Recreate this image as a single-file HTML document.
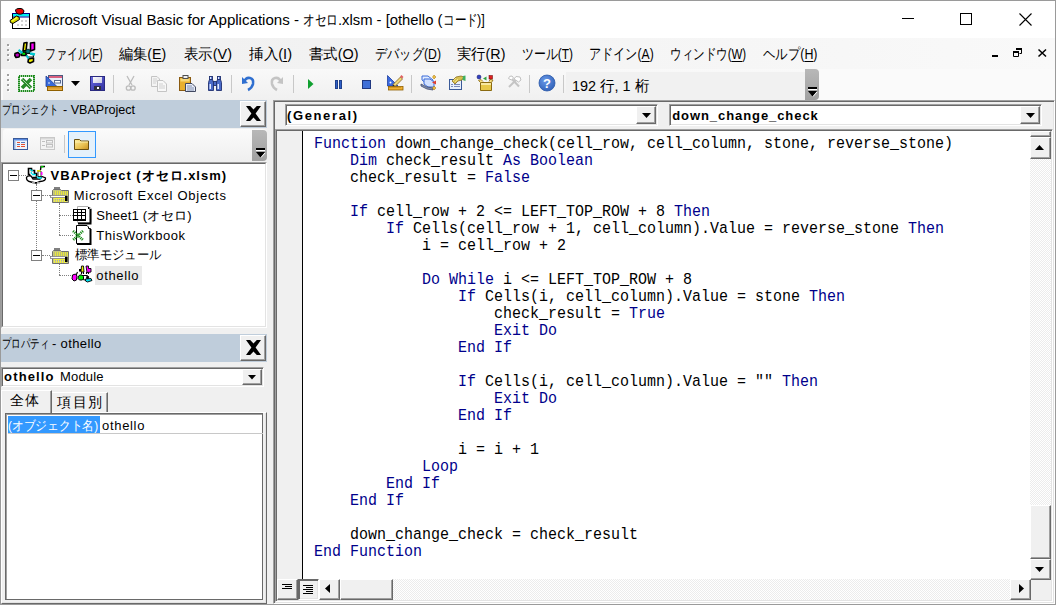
<!DOCTYPE html>
<html><head><meta charset="utf-8"><style>
*{box-sizing:border-box;margin:0;padding:0}
html,body{width:1056px;height:605px;overflow:hidden;background:#f0f0f0;font-family:"Liberation Sans",sans-serif;position:relative;color:#000}
.a{position:absolute}
svg{position:absolute;overflow:visible}
.t{position:absolute;white-space:pre;line-height:15px;transform-origin:0 0}
.t u{text-decoration:underline;text-underline-offset:2px}
.code{position:absolute;font-family:"Liberation Mono",monospace;font-size:15px;line-height:15px;white-space:pre;color:#000;transform:scaleY(1.1);transform-origin:0 0}
.k{color:#00008b}
.sep{position:absolute;width:1px;height:18px;background:#c8c8c8;top:75px}
.btn{position:absolute;background:#f0f0f0;border:1px solid;border-color:#fff #696969 #696969 #fff;box-shadow:inset -1px -1px 0 #a0a0a0}
.sunk{position:absolute;border:1px solid;border-color:#a0a0a0 #fff #fff #a0a0a0;box-shadow:inset 1px 1px 0 #696969,inset -1px -1px 0 #e3e3e3}
.dot{position:absolute;width:2px;height:2px;background:#a0a0a0;box-shadow:1px 1px 0 #fff}

</style></head><body>
<!-- window frame -->
<div class="a" style="left:0;top:0;width:1056px;height:605px;border:1px solid #9a9a9a"></div>
<div class="a" style="left:1px;top:1px;width:1054px;height:37px;background:#fff"></div>
<!-- title icon -->
<svg style="left:0;top:0" width="40" height="40">
<rect x="12.5" y="13.5" width="17" height="15" fill="#fff" stroke="#000"/>
<rect x="12" y="13" width="18" height="1" fill="#00008a"/>
<rect x="13" y="14" width="16" height="2.5" fill="#00f0f0"/>
<rect x="13" y="16.5" width="16" height="1" fill="#0000a0"/>
<g fill="#d0d0d0"><rect x="21" y="20" width="2" height="2"/><rect x="25" y="20" width="2" height="2"/><rect x="17" y="24" width="2" height="2"/><rect x="21" y="24" width="2" height="2"/><rect x="25" y="24" width="2" height="2"/></g>
<path d="M15.5 10 Q16 8.5 19 8.5 L21 8.5 Q23.5 9 24 11 L23 13.5 Q21 14.5 18 14 Q15.5 13 15.5 10Z" fill="#e80000" stroke="#000" stroke-width="1"/>
<path d="M10 20.5 L16.5 16 L19 17 L19.5 19.5 L13 23.5 L10.5 22.5Z" fill="#d8d800" stroke="#000" stroke-width="1"/>
<path d="M12 21 L17 17.5" stroke="#ffff40" stroke-width="1.2"/>
</svg>
<!-- window controls -->
<div class="a" style="left:902px;top:18px;width:12px;height:1px;background:#000"></div>
<div class="a" style="left:960px;top:13px;width:12px;height:12px;border:1px solid #000"></div>
<svg style="left:1019px;top:13px" width="13" height="13"><path d="M0.5 0.5L12.5 12.5M12.5 0.5L0.5 12.5" stroke="#000" stroke-width="1.1"/></svg>

<!-- menubar -->
<div class="a" style="left:1px;top:38px;width:1054px;height:31px;background:linear-gradient(to right,#efefef,#f9f9f9)"></div>
<div class="dot" style="left:7px;top:44px"></div><div class="dot" style="left:7px;top:49px"></div><div class="dot" style="left:7px;top:54px"></div><div class="dot" style="left:7px;top:59px"></div>
<svg style="left:0;top:0" width="40" height="70">
<g stroke="#000" stroke-width="1.6" stroke-linejoin="round">
<path d="M24 43 L27 42.5 L26 50.5 L23 51Z" fill="#f0f000"/>
<path d="M30.5 43 L34.5 42.5 L34.5 49.5 L30.5 51Z" fill="#ff00ff"/>
<path d="M15 53.5 L18 52.5 L20 54.5 L19 57 L16 57.5 L14.8 55.5Z" fill="#c000c0"/>
<path d="M28.5 59 L33.5 58 L33.5 61.5 L30 63 L28 62Z" fill="#f0f000"/>
<path d="M21.5 52 L26 52 L26 55.5 L21.5 55.5Z" fill="#00e000"/>
<path d="M26.5 53.5 H33 L33.5 57 H27Z" fill="#fff" stroke-width="1"/>
</g>
<path d="M18.5 50 L22.5 53" stroke="#00c8d0" stroke-width="2.2"/>
<path d="M30 53.5 L35 54.5" stroke="#00c8d0" stroke-width="2.4"/>
<path d="M26.5 55.5 L28.5 58.5" stroke="#00c8d0" stroke-width="2.2"/>
<circle cx="28" cy="51.3" r="2.2" fill="#007878" stroke="#000" stroke-width=".6"/>
</svg>
<!-- MDI buttons -->
<div class="a" style="left:992px;top:55px;width:6px;height:2px;background:#000"></div>
<svg style="left:1013px;top:48px" width="9" height="9"><path d="M3 .5H8.5V5.5H6.5M.5 3.5H5.5V8.5H.5Z" fill="none" stroke="#000"/><rect x="3" y="0" width="6" height="2" fill="#000"/><rect x="0" y="3" width="6" height="2" fill="#000"/></svg>
<svg style="left:1038px;top:49px" width="9" height="8"><path d="M.5 .5L8 7.5M8 .5L.5 7.5" stroke="#000" stroke-width="1.5"/></svg>

<!-- toolbar -->
<div class="a" style="left:1px;top:69px;width:1054px;height:31px;background:#fafafa"></div><div class="a" style="left:3px;top:69px;width:815px;height:31px;background:linear-gradient(#f9f9f9,#f0f0f0);border-radius:3px 4px 4px 0"></div>
<div class="dot" style="left:7px;top:74px"></div><div class="dot" style="left:7px;top:79px"></div><div class="dot" style="left:7px;top:84px"></div><div class="dot" style="left:7px;top:89px"></div>
<!-- excel -->
<svg style="left:0;top:0" width="70" height="100">
<rect x="19" y="76" width="15" height="15" fill="#fff" stroke="#1a8a1a" stroke-width="2" stroke-dasharray="1.4 .6"/>
<path d="M22 79 L31 88 M31 79 L22 88" stroke="#2a8a2a" stroke-width="3.6"/>
<path d="M22.5 79.5 L30.5 87.5" stroke="#c8e8c8" stroke-width=".8"/>
<!-- userform -->
<rect x="48.5" y="75.5" width="14" height="11" fill="#e8eefa" stroke="#4a5a80"/>
<rect x="49" y="76" width="13" height="2" fill="#d86080"/>
<rect x="54.5" y="80.5" width="6" height="2.5" fill="#fff" stroke="#5a6a90"/>
<path d="M46 76 L46 86.5 L57 86.5Z" fill="#3a6ad8" stroke="#2040a0" stroke-width=".8"/>
<circle cx="49" cy="83" r=".8" fill="#fff"/>
<rect x="47.5" y="86.5" width="15" height="4" fill="#f0b040" stroke="#906000"/>
<path d="M49 87V88.5M51 87V88.5M53 87V88.5M55 87V88.5M57 87V88.5M59 87V88.5M61 87V88.5" stroke="#906000" stroke-width=".6"/>
</svg>
<svg style="left:71px;top:81px" width="10" height="6"><path d="M0 0H9L4.5 5Z" fill="#000"/></svg>
<!-- save -->
<svg style="left:0;top:0" width="230" height="100">
<defs><linearGradient id="sg" x1="0" y1="0" x2="1" y2="1"><stop offset="0" stop-color="#6a6ae0"/><stop offset="1" stop-color="#3030a0"/></linearGradient>
<linearGradient id="lg" x1="0" y1="0" x2="1" y2="1"><stop offset="0" stop-color="#fff"/><stop offset="1" stop-color="#c8c8e0"/></linearGradient></defs>
<rect x="90.5" y="76.5" width="14" height="14" fill="url(#sg)" stroke="#2a2a80"/>
<rect x="93" y="77" width="9" height="6" fill="url(#lg)"/>
<rect x="94" y="86" width="7" height="4" fill="#303040"/>
<rect x="97" y="87" width="2" height="2" fill="#fff"/>
<!-- cut -->
<g stroke="#bcbcbc" fill="none" stroke-width="1.3"><path d="M127 76L132 85M134 76L129 85"/><circle cx="128.5" cy="88" r="2.2"/><circle cx="133" cy="88" r="2.2"/></g>
<!-- copy -->
<path d="M151.5 76.5H157L159.5 79V86.5H151.5Z" fill="#f4f4f4" stroke="#c4c4c4"/>
<path d="M157.5 80.5H163L166.5 84V91.5H157.5Z" fill="#f8f8f8" stroke="#c4c4c4"/>
<path d="M153 79H157M153 81H158M153 83H156M159 84H163M159 86H165M159 88H165" stroke="#d0d0d0"/>
<!-- paste -->
<rect x="179.5" y="77.5" width="11" height="13" fill="#e8b030" stroke="#8a5a10"/>
<rect x="180.5" y="78.5" width="9" height="3" fill="#f8d878"/>
<rect x="183" y="75.5" width="5" height="3" fill="#f0f0f0" stroke="#505050"/>
<path d="M185.5 83.5H192L195.5 87V91.5H185.5Z" fill="#e8ecf8" stroke="#404860"/>
<path d="M187 86H192M187 88H194M187 90H194" stroke="#8090b0"/>
<!-- find -->
<g fill="#4a6ac8" stroke="#203070" stroke-width=".9">
<path d="M208.5 82.5 L209.5 79.5 H212.5 L213.5 82.5 V90.5 H208.5Z"/>
<path d="M216.5 82.5 L217.5 79.5 H220.5 L221.5 82.5 V90.5 H216.5Z"/>
<rect x="209.5" y="76.5" width="3" height="3"/><rect x="217.5" y="76.5" width="3" height="3"/>
<rect x="213.5" y="81.5" width="3" height="4"/></g>
<rect x="209.5" y="84" width="1.5" height="5" fill="#e0e8ff"/><rect x="217.5" y="84" width="1.5" height="5" fill="#e0e8ff"/>
<rect x="210" y="77" width="1.2" height="2" fill="#e0e8ff"/><rect x="218" y="77" width="1.2" height="2" fill="#e0e8ff"/>
</svg>
<div class="sep" style="left:113px"></div>
<div class="sep" style="left:231px"></div>
<!-- undo -->
<svg style="left:242px;top:76px" width="14" height="15"><path d="M2 6 Q4 1 8 2 Q12 3 11 8 Q10 12 6 14" fill="none" stroke="#2f6fd0" stroke-width="2.6"/><path d="M0 1 L6 7 L0 8Z" fill="#2f6fd0"/></svg>
<!-- redo disabled -->
<svg style="left:269px;top:76px" width="14" height="15"><path d="M12 6 Q10 1 6 2 Q2 3 3 8 Q4 12 8 14" fill="none" stroke="#c4c4c4" stroke-width="2.6"/><path d="M14 1 L8 7 L14 8Z" fill="#c4c4c4"/></svg>
<div class="sep" style="left:293px"></div>
<!-- run -->
<svg style="left:308px;top:79px" width="6" height="10"><path d="M0 0L5.5 5L0 10Z" fill="#10a030"/></svg>
<!-- pause -->
<div class="a" style="left:335px;top:80px;width:3px;height:9px;background:#3060c8;border:1px solid #20408a"></div>
<div class="a" style="left:339px;top:80px;width:3px;height:9px;background:#3060c8;border:1px solid #20408a"></div>
<!-- stop -->
<div class="a" style="left:362px;top:80px;width:9px;height:9px;background:#4070d8;border:1px solid #203880"></div>
<!-- design mode -->
<svg style="left:0;top:0" width="480" height="100">
<path d="M387.5 75.5 L387.5 86 L398 86Z" fill="#3a6ae0" stroke="#2040a0" stroke-width=".8"/>
<circle cx="390.5" cy="82.5" r="1" fill="#fff"/>
<path d="M393 84.5 L400.5 77 L402.5 79 L395 86.5Z" fill="#f0d878" stroke="#806020" stroke-width=".8"/>
<path d="M400 76.5 L401.5 75 L403.5 77 L402 78.5Z" fill="#e06060"/>
<path d="M393 84.5 L395 86.5 L392.5 87Z" fill="#202020"/>
<rect x="388.5" y="86.5" width="14.5" height="3.5" fill="#f0b030" stroke="#906000" stroke-width=".8"/>
<path d="M390 87V88M392 87V88M394 87V88M396 87V88M398 87V88M400 87V88" stroke="#906000" stroke-width=".6"/>
<!-- project explorer -->
<path d="M422 76 L428 76 L433 80 L433 84 L427 84 L422 80Z" fill="#e0ecff" stroke="#3a6ad8" stroke-width="1"/>
<path d="M424 79 L430 79 L434 82 L434 87 L428 87 L424 84Z" fill="#d0e0ff" stroke="#3a6ad8" stroke-width="1"/>
<path d="M421 86 L427 89 L433 90 L433 88 L427 87 L421 84Z" fill="#8090b0" stroke="#404a70" stroke-width=".8"/>
<path d="M434 75 L436 77 L434 79 L432.5 77Z" fill="#f0c040" stroke="#a07010" stroke-width=".5"/>
<path d="M432 82.5 L436 80.5 L436 84.5Z" fill="#e04030"/>
<path d="M434 86 L436 88 L434 90 L432.5 88Z" fill="#f0c040" stroke="#a07010" stroke-width=".5"/>
<!-- properties -->
<rect x="449.5" y="79.5" width="12" height="10" fill="#e8f0fc" stroke="#3a5a98"/>
<path d="M451 84.5H453M454 84.5H460M451 86.5H453M454 86.5H460" stroke="#7a8ab8"/>
<path d="M452 81 L456 77 L461 76 L464 77 L462 80 L458 81 L455 84Z" fill="#d8c050" stroke="#806010" stroke-width=".7"/>
<path d="M453 81L456 78M455 82L458 79" stroke="#f8f0a0" stroke-width=".7"/>
<path d="M463 76 L465.5 75.5 L465.5 81 L462.5 80Z" fill="#40b060"/>
</svg>
<div class="sep" style="left:411px"></div>
<!-- object browser -->
<svg style="left:0;top:0" width="530" height="100">
<path d="M480.5 82.5 H491.5 V90.5 H480.5Z" fill="#e8c848" stroke="#8a6a10"/>
<path d="M480.5 82.5 L478.5 80.5 L481 79.5 L483 81.5 M491.5 82.5 L493 80 L490 79.5 L489 81.5" fill="#f8e080" stroke="#8a6a10" stroke-width=".8"/>
<rect x="481" y="83" width="10" height="2" fill="#f8e8a0"/>
<circle cx="479" cy="77" r="2" fill="#3040c0" stroke="#101060" stroke-width=".5"/>
<path d="M483 78.5 L486.5 76.5 L486.5 80.5Z" fill="#30a040"/>
<rect x="489" y="75.5" width="3.5" height="3.5" fill="#e02020" stroke="#600" stroke-width=".5"/>
<!-- toolbox -->
<g stroke="#c4c4c4" stroke-width="2" fill="none">
<path d="M509 87 L516.5 79.5"/><path d="M511 78 L519 86.5"/></g>
<path d="M514 79 L516 76.5 L520 77 L521 80 L518.5 82Z" fill="#fff" stroke="#c0c0c0" stroke-width="1"/>
<path d="M508.5 78.5 Q509 75.5 512 76 L513.5 78 L511.5 80Z" fill="#fff" stroke="#c0c0c0" stroke-width="1"/>
</svg>
<div class="sep" style="left:529px"></div>
<!-- help -->
<svg style="left:538px;top:74px" width="18" height="18"><defs><radialGradient id="hg" cx=".4" cy=".35" r=".7"><stop offset="0" stop-color="#6a9ae8"/><stop offset="1" stop-color="#3060b8"/></radialGradient></defs><circle cx="9" cy="9" r="8" fill="url(#hg)" stroke="#2a58a8" stroke-width=".8"/><text x="9" y="14" text-anchor="middle" font-family="Liberation Sans" font-weight="bold" font-size="13" fill="#fff">?</text></svg>
<div class="sep" style="left:563px"></div>
<!-- status box -->
<div class="a" style="left:566px;top:72px;width:239px;height:28px;background:#f1f1f1"></div>
<div class="a" style="left:805px;top:69px;width:14px;height:31px;background:linear-gradient(#b8b8b8,#a0a0a0);border-radius:0 4px 4px 0"></div>
<div class="a" style="left:808px;top:87px;width:9px;height:2px;background:#000;box-shadow:0 1px 0 #fff"></div>
<svg style="left:808px;top:91px" width="10" height="7"><path d="M0 0H9L4.5 5.5Z" fill="#000"/><path d="M5 5.5L9 1" stroke="#fff"/></svg>

<!-- ================= project pane ================= -->
<div class="a" style="left:1px;top:100px;width:266px;height:28px;background:#bfcddb"></div>
<div class="btn" style="left:240px;top:101px;width:26px;height:26px"></div>
<svg style="left:246px;top:106px" width="15" height="15"><path d="M0 0H4.2L7.5 3.6L10.8 0H15L9.6 7.5L15 15H10.8L7.5 11.4L4.2 15H0L5.4 7.5Z" fill="#000"/></svg>
<!-- project toolbar -->
<div class="a" style="left:3px;top:129px;width:264px;height:32px;background:linear-gradient(#fbfbfb,#efefef);border-radius:3px 4px 4px 3px"></div>
<svg style="left:0;top:0" width="100" height="160">
<defs><linearGradient id="fg" x1="0" y1="0" x2="1" y2="1"><stop offset="0" stop-color="#fff0a0"/><stop offset=".6" stop-color="#e8c050"/><stop offset="1" stop-color="#c89020"/></linearGradient></defs>
<rect x="13.5" y="138.5" width="14" height="11" fill="#eef4fc" stroke="#3a5a98"/>
<rect x="14" y="139" width="13" height="1.5" fill="#5a8ae0"/>
<rect x="14" y="140.5" width="1.5" height="8.5" fill="#a0b8e0"/>
<path d="M17 142.5H20M17 144.5H20M17 146.5H20" stroke="#e85030" stroke-width="1"/>
<path d="M21 142.5H25M21 144.5H25M21 146.5H25" stroke="#e85030" stroke-width="1"/>
<path d="M17 144.5H20M21 142.5H25" stroke="#5a7ab8" stroke-width="1"/>
<rect x="40.5" y="137.5" width="14" height="12" fill="#f4f4f4" stroke="#c8c8c8"/>
<rect x="41" y="138" width="13" height="1.5" fill="#d8d8d8"/>
<path d="M42 141.5H45M42 145.5H45" stroke="#c0c0c0"/>
<rect x="46.5" y="140.5" width="6" height="2.5" fill="none" stroke="#c0c0c0"/>
<rect x="46.5" y="144.5" width="6" height="2.5" fill="none" stroke="#c0c0c0"/>
</svg>
<div class="a" style="left:64px;top:135px;width:1px;height:18px;background:#c8c8c8"></div>
<div class="a" style="left:68px;top:131px;width:28px;height:27px;background:#e5f1fb;border:1px solid #3399ff"></div>
<svg style="left:74px;top:138px" width="16" height="13"><path d="M.5 1.5H5.5L7 3H14.5V11.5H.5Z" fill="url(#fg)" stroke="#6a5010"/><path d="M1 4H14" stroke="#fff8c0" stroke-width=".8"/></svg>
<!-- project toolbar scroll handle -->
<div class="a" style="left:252px;top:130px;width:15px;height:31px;background:linear-gradient(#b8b8b8,#a0a0a0);border-radius:0 4px 4px 0"></div>
<div class="a" style="left:256px;top:148px;width:9px;height:2px;background:#000;box-shadow:0 1px 0 #fff"></div>
<svg style="left:256px;top:152px" width="10" height="7"><path d="M0 0H9L4.5 5.5Z" fill="#000"/><path d="M5 5.5L9 1" stroke="#fff"/></svg>

<!-- tree frame -->
<div class="a" style="left:1px;top:162px;width:266px;height:166px;background:#fff;border:1px solid;border-color:#a0a0a0 #fff #fff #a0a0a0"></div>
<div class="a" style="left:2px;top:163px;width:264px;height:164px;border:1px solid;border-color:#696969 #e3e3e3 #e3e3e3 #696969"></div>
<!-- tree lines -->
<div class="a" style="left:19px;top:175px;width:7px;border-top:1px dotted #808080"></div>
<div class="a" style="left:36px;top:184px;height:72px;border-left:1px dotted #808080"></div>
<div class="a" style="left:42px;top:195px;width:8px;border-top:1px dotted #808080"></div>
<div class="a" style="left:42px;top:255px;width:8px;border-top:1px dotted #808080"></div>
<div class="a" style="left:59px;top:203px;height:32px;border-left:1px dotted #808080"></div>
<div class="a" style="left:59px;top:215px;width:14px;border-top:1px dotted #808080"></div>
<div class="a" style="left:59px;top:235px;width:14px;border-top:1px dotted #808080"></div>
<div class="a" style="left:59px;top:263px;height:12px;border-left:1px dotted #808080"></div>
<div class="a" style="left:59px;top:275px;width:14px;border-top:1px dotted #808080"></div>
<!-- expand boxes -->
<div class="a" style="left:8px;top:170px;width:11px;height:11px;border:1px solid #808080;background:#fff"></div><div class="a" style="left:10px;top:175px;width:7px;height:1px;background:#000"></div>
<div class="a" style="left:31px;top:190px;width:11px;height:11px;border:1px solid #808080;background:#fff"></div><div class="a" style="left:33px;top:195px;width:7px;height:1px;background:#000"></div>
<div class="a" style="left:31px;top:250px;width:11px;height:11px;border:1px solid #808080;background:#fff"></div><div class="a" style="left:33px;top:255px;width:7px;height:1px;background:#000"></div>
<!-- VBAProject icon -->
<svg style="left:0;top:0" width="60" height="200">
<path d="M28.5 168.5 H31.5 V170.5 H34.5 V173.5 H36.5 V177.5 H29.5 V174.5 H28.5Z" fill="#fff" stroke="#000" stroke-width="1.6"/>
<path d="M30 169.5 L33 171 M31 172 L32 174 M32 174.5 H36 M36.5 176.5 L40 178" stroke="#00e8f0" stroke-width="1.3"/>
<path d="M26.5 177.5 Q27 175.5 31 176 L33 179 L40 179 L42 176.5 L45.5 178 Q46 181 40 181.5 L36 183 L31 182 Q26 181 26.5 177.5Z" fill="#fff" stroke="#000" stroke-width="1.3"/>
<path d="M38 176 L42 177.5 L41.5 179 L37.5 178.5Z" fill="#00e8f0"/>
<path d="M38 176.5 H41 V171 H38Z" fill="#fff" stroke="#000" stroke-width=".8"/>
<rect x="37" y="170" width="3.5" height="1.6" fill="#e8e000"/>
<rect x="41" y="172" width="1.5" height="3" fill="#ff00ff"/>
<path d="M40.5 170 L41 166.5 L45 166.5" stroke="#000" stroke-width="1.4" fill="none"/>
<rect x="41" y="166" width="2.5" height="1.5" fill="#00d000"/>
<rect x="32" y="182" width="8" height="1.5" fill="#a0a0a0"/><rect x="35" y="182" width="2" height="1.5" fill="#000"/>
</svg>
<!-- folders -->
<svg style="left:0;top:0" width="75" height="270">
<rect x="54" y="187" width="6" height="2" fill="#808080"/>
<path d="M53.5 189.5 H60.5 L61.5 190.5 H68.5 V202.5 H52.5 V190.5Z" fill="#c8c880" stroke="#707070"/>
<rect x="54" y="191" width="14" height="4" fill="#e8e840"/>
<path d="M54 192H67M54 194H67" stroke="#9090b0" stroke-dasharray="1 1"/>
<rect x="50.5" y="195.5" width="16" height="2" fill="#fff" stroke="#808080" stroke-width=".8"/>
<rect x="54" y="198" width="12" height="4" fill="#f0f040"/>
<path d="M55 199.5H65M55 201H65" stroke="#a0a0d0" stroke-dasharray="1 1"/>
<rect x="65" y="196" width="2.5" height="5" fill="#000"/>
</svg>
<svg style="left:0;top:0" width="75" height="270">
<rect x="54" y="248" width="6" height="2" fill="#808080"/>
<path d="M53.5 250.5 H60.5 L61.5 251.5 H68.5 V263.5 H52.5 V251.5Z" fill="#c8c880" stroke="#707070"/>
<rect x="54" y="252" width="14" height="4" fill="#e8e840"/>
<path d="M54 253H67M54 255H67" stroke="#9090b0" stroke-dasharray="1 1"/>
<rect x="50.5" y="256.5" width="16" height="2" fill="#fff" stroke="#808080" stroke-width=".8"/>
<rect x="54" y="259" width="12" height="4" fill="#f0f040"/>
<path d="M55 260.5H65M55 262H65" stroke="#a0a0d0" stroke-dasharray="1 1"/>
<rect x="65" y="257" width="2.5" height="5" fill="#000"/>
</svg>
<!-- sheet icon -->
<svg style="left:0;top:0" width="100" height="250">
<path d="M77.5 206.5 H88 L89.5 208 L91 208 V222.5 H77.5Z" fill="#fff" stroke="#b0b0b0"/>
<path d="M90.5 209 V223.5 H78" stroke="#000" stroke-width="2" fill="none"/>
<rect x="88" y="207" width="1.5" height="2" fill="#000"/>
<rect x="73" y="209" width="13" height="12" fill="#000"/>
<g fill="#fff"><rect x="74" y="210" width="3" height="2"/><rect x="78" y="210" width="3" height="2"/><rect x="82" y="210" width="3" height="2"/>
<rect x="74" y="213" width="3" height="2"/><rect x="78" y="213" width="3" height="2"/><rect x="82" y="213" width="3" height="2"/>
<rect x="74" y="216" width="3" height="3"/><rect x="78" y="216" width="3" height="3"/><rect x="82" y="216" width="3" height="3"/></g>
<path d="M76.5 225.5 H87 L88.5 227 V228.5 H90.5 V243.5 H76.5Z" fill="#fff" stroke="#000"/>
<path d="M90.5 229 V244 H77" stroke="#000" stroke-width="2" fill="none"/>
<path d="M73 231 L83 240 M83 231 L73 240" stroke="#1a8a1a" stroke-width="2.6" stroke-dasharray="1.2 .8"/>
</svg>
<!-- module icon -->
<svg style="left:0;top:0" width="100" height="300">
<g stroke="#000" stroke-width="1.1" fill="none">
<path d="M77.5 272 L76 275.5"/><path d="M81.5 272V274M83.5 272V274M86.5 272V274M88.5 272V274"/>
<path d="M83 275.5 H87 L89 277.5"/><path d="M83 279.5 L85 280"/>
</g>
<path d="M79 269 H81 V271.5 H79Z" fill="#000"/>
<path d="M81.5 266 L83.5 266 L84 272 L81 272Z" fill="#f0f000" stroke="#000" stroke-width=".9"/>
<path d="M86 266 L88.5 266 L88.5 268.5 L91 268.5 L91 272 L87 272.5 Z" fill="#ff00ff" stroke="#000" stroke-width=".9"/>
<path d="M72.5 275 L75.5 274 L77 276 L76.5 280 L74 281 L72 279Z" fill="#ff00ff" stroke="#000" stroke-width="1"/>
<path d="M78.5 276 L80 275 L82 275 L83.5 276.5 L83.5 279 L82 280 L79.5 280 L78 278.5Z" fill="#00f000" stroke="#000" stroke-width="1"/>
<path d="M86 276.5 L88.5 276 L89 279 L86.5 279.5Z" fill="#000"/>
<path d="M85.5 279 L91 278.5 L92 280.5 L87.5 282 L85.5 281Z" fill="#00e0f0" stroke="#000" stroke-width=".9"/>
</svg>
<!-- othello highlight -->
<div class="a" style="left:95px;top:266px;width:47px;height:19px;background:#eaeaea"></div>

<!-- ================= properties pane ================= -->
<div class="a" style="left:1px;top:334px;width:266px;height:28px;background:#bfcddb"></div>
<div class="btn" style="left:240px;top:335px;width:26px;height:26px"></div>
<svg style="left:246px;top:340px" width="15" height="15"><path d="M0 0H4.2L7.5 3.6L10.8 0H15L9.6 7.5L15 15H10.8L7.5 11.4L4.2 15H0L5.4 7.5Z" fill="#000"/></svg>
<!-- combo -->
<div class="sunk" style="left:1px;top:367px;width:263px;height:20px;background:#fff"></div>
<div class="btn" style="left:242px;top:369px;width:20px;height:16px"></div>
<svg style="left:248px;top:375px" width="8" height="5"><path d="M0 0H8L4 4.5Z" fill="#000"/></svg>
<!-- grid -->
<div class="a" style="left:1px;top:412px;width:266px;height:192px;border:1px solid;border-color:#fff #696969 #696969 #fff;box-shadow:inset -1px -1px 0 #e3e3e3"></div>
<div class="a" style="left:5px;top:413px;width:258px;height:187px;background:#fff;border:1px solid #696969;box-shadow:inset 1px 1px 0 #a0a0a0,inset -1px -1px 0 #fff"></div>
<div class="a" style="left:8px;top:433px;width:255px;height:1px;background:#c8c8c8"></div>
<div class="a" style="left:8px;top:416px;width:92px;height:17px;background:#3399ff"></div>

<!-- tabs -->
<div class="a" style="left:1px;top:390px;width:51px;height:23px;background:#f0f0f0;border:1px solid;border-bottom:0;border-color:#fff #696969 transparent #fff;box-shadow:inset -1px 0 0 #a0a0a0"></div>
<div class="a" style="left:52px;top:392px;width:56px;height:20px;background:#f0f0f0;border-top:1px solid #fff;border-right:1px solid #696969;box-shadow:inset -1px 0 0 #a0a0a0"></div>
<!-- ================= code window ================= -->
<div class="sunk" style="left:273px;top:100px;width:782px;height:504px;background:#f0f0f0"></div>
<!-- combos -->
<div class="sunk" style="left:285px;top:104px;width:373px;height:22px;background:#fff"></div>
<div class="btn" style="left:636px;top:106px;width:20px;height:18px"></div>
<svg style="left:642px;top:113px" width="9" height="6"><path d="M0 0H9L4.5 5Z" fill="#000"/></svg>
<div class="sunk" style="left:669px;top:104px;width:373px;height:22px;background:#fff"></div>
<div class="btn" style="left:1020px;top:106px;width:20px;height:18px"></div>
<svg style="left:1026px;top:113px" width="9" height="6"><path d="M0 0H9L4.5 5Z" fill="#000"/></svg>
<!-- code area frame -->
<div class="sunk" style="left:275px;top:129px;width:778px;height:473px;background:#fff"></div>
<div class="a" style="left:277px;top:131px;width:25px;height:448px;background:#f0f0f0"></div>
<div class="a" style="left:302px;top:131px;width:1px;height:448px;background:#000"></div>
<!-- vertical scrollbar -->
<div class="a" style="left:1030px;top:131px;width:21px;height:448px;background:repeating-conic-gradient(#fff 0 25%,#ececec 0 50%) 0 0/2px 2px"></div>
<div class="btn" style="left:1030px;top:131px;width:21px;height:6px"></div>
<div class="btn" style="left:1030px;top:137px;width:21px;height:22px"></div>
<svg style="left:1035px;top:145px" width="10" height="6"><path d="M0 5H9L4.5 0Z" fill="#000"/></svg>
<div class="btn" style="left:1030px;top:505px;width:21px;height:54px"></div>
<div class="btn" style="left:1030px;top:559px;width:21px;height:21px"></div>
<svg style="left:1035px;top:567px" width="10" height="6"><path d="M0 0H9L4.5 5Z" fill="#000"/></svg>
<!-- horizontal scrollbar -->
<div class="a" style="left:277px;top:579px;width:754px;height:21px;background:repeating-conic-gradient(#fff 0 25%,#ececec 0 50%) 0 0/2px 2px"></div>
<div class="btn" style="left:277px;top:579px;width:21px;height:21px"></div>
<svg style="left:282px;top:584px" width="11" height="5"><path d="M0 .5H10M3 2.5H10M0 4.5H10" stroke="#000"/></svg>
<div class="sunk" style="left:298px;top:579px;width:21px;height:21px;background:#f0f0f0;border-color:#696969 #fff #fff #696969"></div>
<svg style="left:303px;top:585px" width="11" height="9"><path d="M0 .5H10M3 2.5H10M0 4.5H10M3 6.5H10M0 8.5H10" stroke="#000"/></svg>
<div class="btn" style="left:319px;top:579px;width:21px;height:21px"></div>
<svg style="left:325px;top:584px" width="6" height="10"><path d="M5 0V9L0 4.5Z" fill="#000"/></svg>
<div class="btn" style="left:340px;top:579px;width:53px;height:21px"></div>
<div class="btn" style="left:1010px;top:579px;width:21px;height:21px"></div>
<svg style="left:1019px;top:584px" width="6" height="10"><path d="M0 0V9L5 4.5Z" fill="#000"/></svg>
<div class="a" style="left:1031px;top:580px;width:20px;height:20px;background:#f0f0f0"></div>

<div class="code" style="left:314px;top:135.90px"><span class="k">Function</span> down_change_check(cell_row, cell_column, stone, reverse_stone)</div>
<div class="code" style="left:350px;top:152.90px"><span class="k">Dim</span> check_result <span class="k">As Boolean</span></div>
<div class="code" style="left:350px;top:169.90px">check_result = <span class="k">False</span></div>
<div class="code" style="left:350px;top:203.90px"><span class="k">If</span> cell_row + 2 &lt;= LEFT_TOP_ROW + 8 <span class="k">Then</span></div>
<div class="code" style="left:386px;top:220.90px"><span class="k">If</span> Cells(cell_row + 1, cell_column).Value = reverse_stone <span class="k">Then</span></div>
<div class="code" style="left:422px;top:237.90px">i = cell_row + 2</div>
<div class="code" style="left:422px;top:271.90px"><span class="k">Do While</span> i &lt;= LEFT_TOP_ROW + 8</div>
<div class="code" style="left:458px;top:288.90px"><span class="k">If</span> Cells(i, cell_column).Value = stone <span class="k">Then</span></div>
<div class="code" style="left:494px;top:305.90px">check_result = <span class="k">True</span></div>
<div class="code" style="left:494px;top:322.90px"><span class="k">Exit Do</span></div>
<div class="code" style="left:458px;top:339.90px"><span class="k">End If</span></div>
<div class="code" style="left:458px;top:373.90px"><span class="k">If</span> Cells(i, cell_column).Value = "" <span class="k">Then</span></div>
<div class="code" style="left:494px;top:390.90px"><span class="k">Exit Do</span></div>
<div class="code" style="left:458px;top:407.90px"><span class="k">End If</span></div>
<div class="code" style="left:458px;top:441.90px">i = i + 1</div>
<div class="code" style="left:422px;top:458.90px"><span class="k">Loop</span></div>
<div class="code" style="left:386px;top:475.90px"><span class="k">End If</span></div>
<div class="code" style="left:350px;top:492.90px"><span class="k">End If</span></div>
<div class="code" style="left:350px;top:526.90px">down_change_check = check_result</div>
<div class="code" style="left:314px;top:543.90px"><span class="k">End Function</span></div>
<div class="t" style="left:35.50px;top:12.00px;font-size:15px;transform:scaleX(1.0057);">Microsoft Visual Basic for Applications -</div>
<div class="t" style="left:303.00px;top:12.00px;font-size:15px;transform:scaleX(0.7822);">オセロ</div>
<div class="t" style="left:338.10px;top:12.00px;font-size:15px;transform:scaleX(0.9862);">.xlsm - [othello (</div>
<div class="t" style="left:442.50px;top:12.00px;font-size:15px;transform:scaleX(0.7733);">コード</div>
<div class="t" style="left:476.50px;top:12.00px;font-size:15px;transform:scaleX(0.8504);">)]</div>
<div class="t" style="left:44.50px;top:45.50px;font-size:15px;transform:scaleX(0.7275);">ファイル(<u>F</u>)</div>
<div class="t" style="left:118.80px;top:45.50px;font-size:15px;transform:scaleX(0.9457);">編集(<u>E</u>)</div>
<div class="t" style="left:183.50px;top:45.50px;font-size:15px;transform:scaleX(0.9597);">表示(<u>V</u>)</div>
<div class="t" style="left:248.50px;top:45.50px;font-size:15px;transform:scaleX(0.9735);">挿入(<u>I</u>)</div>
<div class="t" style="left:308.90px;top:45.50px;font-size:15px;transform:scaleX(0.9599);">書式(<u>O</u>)</div>
<div class="t" style="left:374.50px;top:45.50px;font-size:15px;transform:scaleX(0.8164);">デバッグ(<u>D</u>)</div>
<div class="t" style="left:457.10px;top:45.50px;font-size:15px;transform:scaleX(0.9519);">実行(<u>R</u>)</div>
<div class="t" style="left:521.80px;top:45.50px;font-size:15px;transform:scaleX(0.7947);">ツール(<u>T</u>)</div>
<div class="t" style="left:588.50px;top:45.50px;font-size:15px;transform:scaleX(0.8086);">アドイン(<u>A</u>)</div>
<div class="t" style="left:669.80px;top:45.50px;font-size:15px;transform:scaleX(0.7684);">ウィンドウ(<u>W</u>)</div>
<div class="t" style="left:762.50px;top:45.50px;font-size:15px;transform:scaleX(0.8277);">ヘルプ(<u>H</u>)</div>
<div class="t" style="left:571.50px;top:77.50px;font-size:15px;transform:scaleX(0.9619);">192 行, 1 桁</div>
<div class="t" style="left:1.50px;top:102.00px;font-size:13px;transform:scaleX(0.7269);">プロジェクト</div>
<div class="t" style="left:62.50px;top:102.00px;font-size:13px;transform:scaleX(0.9675);">- VBAProject</div>
<div class="t" style="left:1.50px;top:336.00px;font-size:13px;transform:scaleX(0.7292);">プロパティ</div>
<div class="t" style="left:51.90px;top:336.00px;font-size:13px;letter-spacing:0.394px;">- othello</div>
<div class="t" style="left:50.50px;top:167.50px;font-size:13px;font-weight:bold;letter-spacing:0.973px;">VBAProject (オセロ.xlsm)</div>
<div class="t" style="left:73.80px;top:188.00px;font-size:13px;letter-spacing:0.744px;">Microsoft Excel Objects</div>
<div class="t" style="left:96.30px;top:208.30px;font-size:13px;letter-spacing:0.247px;">Sheet1 (オセロ)</div>
<div class="t" style="left:96.30px;top:228.20px;font-size:13px;letter-spacing:0.523px;">ThisWorkbook</div>
<div class="t" style="left:74.50px;top:247.00px;font-size:13px;transform:scaleX(0.9505);">標準モジュール</div>
<div class="t" style="left:96.30px;top:268.00px;font-size:13px;letter-spacing:0.648px;">othello</div>
<div class="t" style="left:4.10px;top:369.40px;font-size:13px;font-weight:bold;letter-spacing:1.132px;">othello</div>
<div class="t" style="left:60.00px;top:369.40px;font-size:13px;letter-spacing:0.172px;">Module</div>
<div class="t" style="left:9.50px;top:393.00px;font-size:14px;letter-spacing:1.300px;">全体</div>
<div class="t" style="left:57.00px;top:394.50px;font-size:14px;letter-spacing:1.500px;">項目別</div>
<div class="t" style="left:8.20px;top:417.50px;font-size:13px;color:#fff;transform:scaleX(0.9040);">(オブジェクト名)</div>
<div class="t" style="left:102.10px;top:417.50px;font-size:13px;letter-spacing:0.665px;">othello</div>
<div class="t" style="left:287.00px;top:107.50px;font-size:13px;font-weight:bold;letter-spacing:1.628px;">(General)</div>
<div class="t" style="left:672.20px;top:107.50px;font-size:13px;font-weight:bold;letter-spacing:0.926px;">down_change_check</div>
</body></html>
